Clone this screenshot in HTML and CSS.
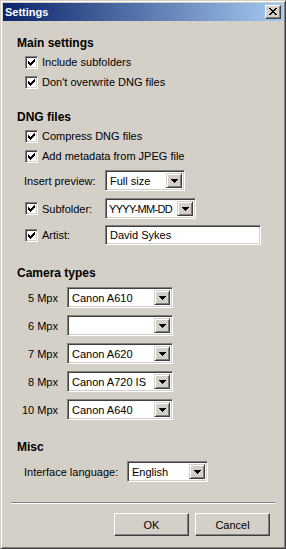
FILE: index.html
```html
<!DOCTYPE html>
<html>
<head>
<meta charset="utf-8">
<title>Settings</title>
<link rel="stylesheet" href="styles.css">
</head>
<body>
<div class="window">
  <div class="titlebar">
    <span class="title">Settings</span>
    <span class="close"><svg width="8" height="7" viewBox="0 0 8 7" shape-rendering="crispEdges"><path d="M0 0h2v1h-2zM6 0h2v1h-2zM1 1h2v1h-2zM5 1h2v1h-2zM2 2h4v1h-4zM3 3h2v1h-2zM2 4h4v1h-4zM1 5h2v1h-2zM5 5h2v1h-2zM0 6h2v1h-2zM6 6h2v1h-2z"/></svg></span>
  </div>

  <h2 class="heading h-main">Main settings</h2>
  <label class="check first"><span class="box"><svg class="tick" width="7" height="7" viewBox="0 0 7 7" shape-rendering="crispEdges"><path d="M6 0h1v1h-1zM5 1h2v1h-2zM0 2h1v1h-1zM4 2h3v1h-3zM0 3h2v1h-2zM3 3h3v1h-3zM0 4h5v1h-5zM1 5h3v1h-3zM2 6h1v1h-1z"/></svg></span>Include subfolders</label>
  <label class="check"><span class="box"><svg class="tick" width="7" height="7" viewBox="0 0 7 7" shape-rendering="crispEdges"><path d="M6 0h1v1h-1zM5 1h2v1h-2zM0 2h1v1h-1zM4 2h3v1h-3zM0 3h2v1h-2zM3 3h3v1h-3zM0 4h5v1h-5zM1 5h3v1h-3zM2 6h1v1h-1z"/></svg></span>Don't overwrite DNG files</label>

  <h2 class="heading h-dng">DNG files</h2>
  <label class="check first"><span class="box"><svg class="tick" width="7" height="7" viewBox="0 0 7 7" shape-rendering="crispEdges"><path d="M6 0h1v1h-1zM5 1h2v1h-2zM0 2h1v1h-1zM4 2h3v1h-3zM0 3h2v1h-2zM3 3h3v1h-3zM0 4h5v1h-5zM1 5h3v1h-3zM2 6h1v1h-1z"/></svg></span>Compress DNG files</label>
  <label class="check"><span class="box"><svg class="tick" width="7" height="7" viewBox="0 0 7 7" shape-rendering="crispEdges"><path d="M6 0h1v1h-1zM5 1h2v1h-2zM0 2h1v1h-1zM4 2h3v1h-3zM0 3h2v1h-2zM3 3h3v1h-3zM0 4h5v1h-5zM1 5h3v1h-3zM2 6h1v1h-1z"/></svg></span>Add metadata from JPEG file</label>

  <div class="field f-preview">
    <span class="flabel">Insert preview:</span>
    <div class="combo w-preview"><span class="ctext">Full size</span><span class="dbtn"><svg width="7" height="4" viewBox="0 0 7 4" shape-rendering="crispEdges"><path d="M0 0h7v1h-7zM1 1h5v1h-5zM2 2h3v1h-3zM3 3h1v1h-1z"/></svg></span></div>
  </div>
  <div class="field f-sub">
    <label class="flabel checklabel"><span class="box"><svg class="tick" width="7" height="7" viewBox="0 0 7 7" shape-rendering="crispEdges"><path d="M6 0h1v1h-1zM5 1h2v1h-2zM0 2h1v1h-1zM4 2h3v1h-3zM0 3h2v1h-2zM3 3h3v1h-3zM0 4h5v1h-5zM1 5h3v1h-3zM2 6h1v1h-1z"/></svg></span>Subfolder:</label>
    <div class="combo w-sub"><span class="ctext tight">YYYY-MM-DD</span><span class="dbtn"><svg width="7" height="4" viewBox="0 0 7 4" shape-rendering="crispEdges"><path d="M0 0h7v1h-7zM1 1h5v1h-5zM2 2h3v1h-3zM3 3h1v1h-1z"/></svg></span></div>
  </div>
  <div class="field f-artist">
    <label class="flabel checklabel"><span class="box"><svg class="tick" width="7" height="7" viewBox="0 0 7 7" shape-rendering="crispEdges"><path d="M6 0h1v1h-1zM5 1h2v1h-2zM0 2h1v1h-1zM4 2h3v1h-3zM0 3h2v1h-2zM3 3h3v1h-3zM0 4h5v1h-5zM1 5h3v1h-3zM2 6h1v1h-1z"/></svg></span>Artist:</label>
    <div class="edit w-artist">David Sykes</div>
  </div>

  <h2 class="heading h-camera">Camera types</h2>
  <div class="cam first"><span class="clabel">5 Mpx</span><div class="combo w-cam"><span class="ctext">Canon A610</span><span class="dbtn"><svg width="7" height="4" viewBox="0 0 7 4" shape-rendering="crispEdges"><path d="M0 0h7v1h-7zM1 1h5v1h-5zM2 2h3v1h-3zM3 3h1v1h-1z"/></svg></span></div></div>
  <div class="cam"><span class="clabel">6 Mpx</span><div class="combo w-cam"><span class="ctext"></span><span class="dbtn"><svg width="7" height="4" viewBox="0 0 7 4" shape-rendering="crispEdges"><path d="M0 0h7v1h-7zM1 1h5v1h-5zM2 2h3v1h-3zM3 3h1v1h-1z"/></svg></span></div></div>
  <div class="cam"><span class="clabel">7 Mpx</span><div class="combo w-cam"><span class="ctext">Canon A620</span><span class="dbtn"><svg width="7" height="4" viewBox="0 0 7 4" shape-rendering="crispEdges"><path d="M0 0h7v1h-7zM1 1h5v1h-5zM2 2h3v1h-3zM3 3h1v1h-1z"/></svg></span></div></div>
  <div class="cam"><span class="clabel">8 Mpx</span><div class="combo w-cam"><span class="ctext">Canon A720 IS</span><span class="dbtn"><svg width="7" height="4" viewBox="0 0 7 4" shape-rendering="crispEdges"><path d="M0 0h7v1h-7zM1 1h5v1h-5zM2 2h3v1h-3zM3 3h1v1h-1z"/></svg></span></div></div>
  <div class="cam"><span class="clabel">10 Mpx</span><div class="combo w-cam"><span class="ctext">Canon A640</span><span class="dbtn"><svg width="7" height="4" viewBox="0 0 7 4" shape-rendering="crispEdges"><path d="M0 0h7v1h-7zM1 1h5v1h-5zM2 2h3v1h-3zM3 3h1v1h-1z"/></svg></span></div></div>

  <h2 class="heading h-misc">Misc</h2>
  <div class="field f-lang">
    <span class="flabel">Interface language:</span>
    <div class="combo w-lang"><span class="ctext">English</span><span class="dbtn"><svg width="7" height="4" viewBox="0 0 7 4" shape-rendering="crispEdges"><path d="M0 0h7v1h-7zM1 1h5v1h-5zM2 2h3v1h-3zM3 3h1v1h-1z"/></svg></span></div>
  </div>

  <div class="separator"></div>

  <div class="buttons">
    <span class="btn">OK</span>
    <span class="btn">Cancel</span>
  </div>
</div>
</body>
</html>
```

FILE: styles.css
```css
html, body {
  margin: 0;
  padding: 0;
  background: #d4d0c8;
}

body {
  font-family: "Liberation Sans", Arial, sans-serif;
  font-size: 11px;
  color: #000;
}

.window {
  box-sizing: border-box;
  width: 286px;
  height: 549px;
  background: #d4d0c8;
  border: 1px solid;
  border-color: #d4d0c8 #404040 #404040 #d4d0c8;
  box-shadow: inset 1px 1px #ffffff, inset -1px -1px #808080;
  padding: 2px;
  display: flex;
  flex-direction: column;
}

/* Title bar */
.titlebar {
  height: 18px;
  flex: none;
  display: flex;
  align-items: center;
  justify-content: space-between;
  background: linear-gradient(to right, #0a246a, #a6caf0);
  padding: 0 2px 0 2px;
}

.title {
  color: #fff;
  font-weight: bold;
  font-size: 11px;
  line-height: 18px;
}

.close {
  box-sizing: border-box;
  width: 16px;
  height: 14px;
  background: #d4d0c8;
  border: 1px solid;
  border-color: #ffffff #404040 #404040 #ffffff;
  box-shadow: inset -1px -1px #808080;
  display: flex;
  align-items: center;
  justify-content: center;
  padding: 0 0 1px 0;
}

/* Headings */
.heading {
  margin: 0 0 0 14px;
  font-size: 12px;
  font-weight: bold;
  line-height: 14px;
  height: 14px;
}

.h-main { margin-top: 15px; }
.h-dng { margin-top: 18px; }
.h-camera { margin-top: 21px; }
.h-misc { margin-top: 20px; }

/* Checkboxes */
.check {
  display: flex;
  align-items: center;
  height: 20px;
  margin-left: 22px;
  gap: 4px;
}

.check.first { margin-top: 2px; }

.box {
  box-sizing: border-box;
  width: 13px;
  height: 13px;
  flex: none;
  background: #fff;
  border: 1px solid;
  border-color: #808080 #ffffff #ffffff #808080;
  box-shadow: inset 1px 1px #404040, inset -1px -1px #d4d0c8;
  display: flex;
  align-items: center;
  justify-content: center;
}

.tick { display: block; }

/* Field rows */
.field {
  display: flex;
  align-items: center;
  height: 21px;
}

.flabel {
  flex: none;
  display: flex;
  align-items: center;
  gap: 4px;
}

.f-preview { margin-top: 4px; margin-left: 21px; }
.f-preview .flabel { width: 81px; }

.f-sub { margin-top: 7px; margin-left: 22px; }
.f-sub .flabel { width: 80px; }

.f-artist { margin-top: 6px; margin-left: 22px; height: 20px; }
.f-artist .flabel { width: 80px; }

.f-lang { margin-top: 7px; margin-left: 21px; }
.f-lang .flabel { width: 103px; }

/* Combo boxes */
.combo {
  box-sizing: border-box;
  height: 21px;
  background: #fff;
  border: 1px solid;
  border-color: #808080 #ffffff #ffffff #808080;
  box-shadow: inset 1px 1px #404040, inset -1px -1px #d4d0c8;
  padding: 2px;
  display: flex;
  align-items: stretch;
}

.ctext {
  flex: 1;
  padding-left: 2px;
  line-height: 17px;
  white-space: nowrap;
  overflow: hidden;
}

.ctext.tight {
  padding-left: 1px;
  letter-spacing: -0.7px;
}

.dbtn {
  box-sizing: border-box;
  width: 16px;
  flex: none;
  background: #d4d0c8;
  border: 1px solid;
  border-color: #d4d0c8 #404040 #404040 #d4d0c8;
  box-shadow: inset 1px 1px #ffffff, inset -1px -1px #808080;
  display: flex;
  align-items: center;
  justify-content: center;
}

.dbtn svg { display: block; }

.w-preview { width: 80px; }
.w-sub { width: 91px; }
.w-cam { width: 106px; }
.w-lang { width: 81px; }

/* Edit box */
.edit {
  box-sizing: border-box;
  height: 20px;
  width: 156px;
  background: #fff;
  border: 1px solid;
  border-color: #808080 #ffffff #ffffff #808080;
  box-shadow: inset 1px 1px #404040, inset -1px -1px #d4d0c8;
  padding: 0 4px;
  line-height: 18px;
}

/* Camera rows */
.cam {
  display: flex;
  align-items: center;
  height: 21px;
  margin-top: 7px;
  margin-left: 15px;
  gap: 9px;
}

.clabel {
  width: 40px;
  text-align: right;
  flex: none;
}

/* Separator */
.separator {
  margin: 20px 8px 0 8px;
  border-top: 1px solid #808080;
  border-bottom: 1px solid #ffffff;
  height: 0;
}

/* Buttons */
.buttons {
  display: flex;
  justify-content: flex-end;
  gap: 6px;
  margin: 9px 13px 0 0;
}

.btn {
  box-sizing: border-box;
  width: 75px;
  height: 23px;
  border: 1px solid;
  border-color: #ffffff #404040 #404040 #ffffff;
  box-shadow: inset -1px -1px #808080;
  background: #d4d0c8;
  display: flex;
  align-items: center;
  justify-content: center;
}
```
